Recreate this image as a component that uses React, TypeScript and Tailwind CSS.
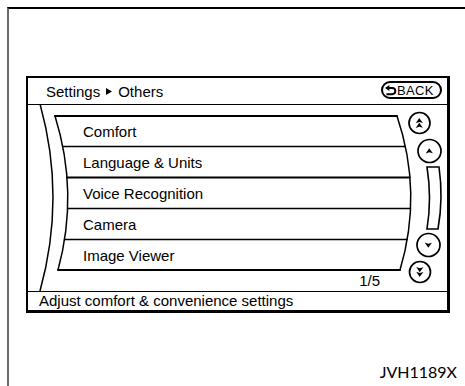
import React from "react";

const ROWS = ["Comfort", "Language & Units", "Voice Recognition", "Camera", "Image Viewer"];

// quadratic curve helpers (page coords), y is linear in t since ctrl y is the midpoint
const TOP = 116;
const BOT = 270;
const qx = (a: number, c: number, b: number, y: number) => {
  const t = (y - TOP) / (BOT - TOP);
  return (1 - t) * (1 - t) * a + 2 * t * (1 - t) * c + t * t * b;
};
const L = [55, 79, 58] as const;
const R = [397, 423, 400] as const;
const DIVIDERS = [146.5, 177.5, 208.5, 239.5];

function Arrow({ cx, cy, dir, double }: { cx: number; cy: number; dir: 1 | -1; double?: boolean }) {
  const head = (oy: number) => (
    <path
      d={`M${cx - 3.8},${cy + oy + 2.6 * dir} L${cx - 0.3},${cy + oy - 2.8 * dir} L${cx + 3.4},${cy + oy + 2.2 * dir} L${cx - 0.2},${cy + oy + 1.3 * dir} Z`}
      fill="black"
    />
  );
  return (
    <g>
      {double ? (
        <>
          {head(-2.3 * dir)}
          {head(2.5 * dir)}
        </>
      ) : (
        head(0)
      )}
    </g>
  );
}

function Drawing() {
  return (
    <svg className="absolute inset-0 pointer-events-none" width="419" height="186" viewBox="0 0 419 186">
      <g transform="translate(-28,-105)" fill="none" stroke="black" strokeLinecap="round">
        {/* outer arc */}
        <path d="M40,104 Q66,197 40,291" strokeWidth="1.5" />
        {/* list panel */}
        <path d={`M${L[0]},${TOP} L${R[0]},${TOP}`} strokeWidth="2" />
        <path d={`M${L[0]},${TOP} Q${L[1]},193 ${L[2]},${BOT}`} strokeWidth="1.5" />
        <path d={`M${R[0]},${TOP} Q${R[1]},193 ${R[2]},${BOT}`} strokeWidth="1.5" />
        <path d={`M${L[2]},${BOT} L${R[2]},${BOT}`} strokeWidth="2" />
        {DIVIDERS.map((y, i) => (
          <path
            key={y}
            d={`M${qx(L[0], L[1], L[2], y)},${y} L${qx(R[0], R[1], R[2], y)},${y}`}
            strokeWidth={i === 1 ? 1.8 : 1.4}
          />
        ))}
        {/* scroll controls */}
        <circle cx="419.5" cy="123" r="10.5" strokeWidth="1.7" />
        <circle cx="429.5" cy="151" r="11.5" strokeWidth="1.7" />
        <path d="M427,167 L439,167 Q443.5,198 438,229 L427,229 Q432,198 427,167 Z" strokeWidth="1.6" />
        <circle cx="428.5" cy="245" r="11.5" strokeWidth="1.7" />
        <circle cx="420" cy="272" r="10.5" strokeWidth="1.7" />
      </g>
      <g transform="translate(-28,-105)">
        <Arrow cx={419.5} cy={123} dir={1} double />
        <Arrow cx={429.5} cy={151} dir={1} />
        <Arrow cx={428.5} cy={245} dir={-1} />
        <Arrow cx={420} cy={272} dir={-1} double />
      </g>
    </svg>
  );
}

export default function App() {
  return (
    <div className="w-[465px] h-[386px] bg-white text-black overflow-hidden font-['Liberation_Sans',Arial,sans-serif]">
      <div className="ml-[7px] mt-[7px] h-[379px] border-t-2 border-l-2 border-t-black border-l-[#6b6b6b] pl-[17px] pt-[67px] pr-[8px]">
        {/* screen */}
        <div className="w-[424px] h-[237px] flex flex-col border-2 border-r-[3px] border-b-[3px] border-black">
          {/* header */}
          <div className="h-[27px] flex justify-between border-b border-black pl-[18px] pr-[5px]">
            <div className="flex items-center text-[15px] leading-[17px] pt-[1px]">
              <span>Settings</span>
              <svg className="mx-[6px]" width="6" height="7" viewBox="0 0 6 7">
                <path d="M0,0 L6,3.5 L0,7 Z" fill="black" />
              </svg>
              <span>Others</span>
            </div>
            <div className="mt-[3px] h-[18px] w-[61px] rounded-full border-2 border-black flex items-center pl-[2px]">
              <svg width="12" height="11" viewBox="0 0 12 11" className="shrink-0">
                <path d="M0,3 L4.4,0 L4.4,6 Z" fill="black" />
                <path d="M4,3 H7.2 A3.1,3.1 0 0 1 7.2,9.2 H1.4" fill="none" stroke="black" strokeWidth="1.9" />
              </svg>
              <span className="text-[13px] leading-[13px] tracking-[0.3px]">BACK</span>
            </div>
          </div>

          {/* list body */}
          <div className="relative flex-1 pt-[11px]">
            <Drawing />
            <div className="flex flex-col">
              {ROWS.map((r) => (
                <div key={r} className="h-[31px] flex items-center pl-[55px] text-[15px] leading-[17px]">
                  {r}
                </div>
              ))}
            </div>
            <div className="mt-[2px] flex justify-end pr-[67px] text-[15px] leading-[15px]">1/5</div>
          </div>

          {/* footer */}
          <div className="h-[19px] border-t border-black pl-[11px] text-[15px] leading-[18px]">
            Adjust comfort &amp; convenience settings
          </div>
        </div>

        <div className="mt-[51px] flex justify-end font-['Lato',sans-serif] text-[16px] leading-[16px]">
          JVH1189X
        </div>
      </div>
    </div>
  );
}
